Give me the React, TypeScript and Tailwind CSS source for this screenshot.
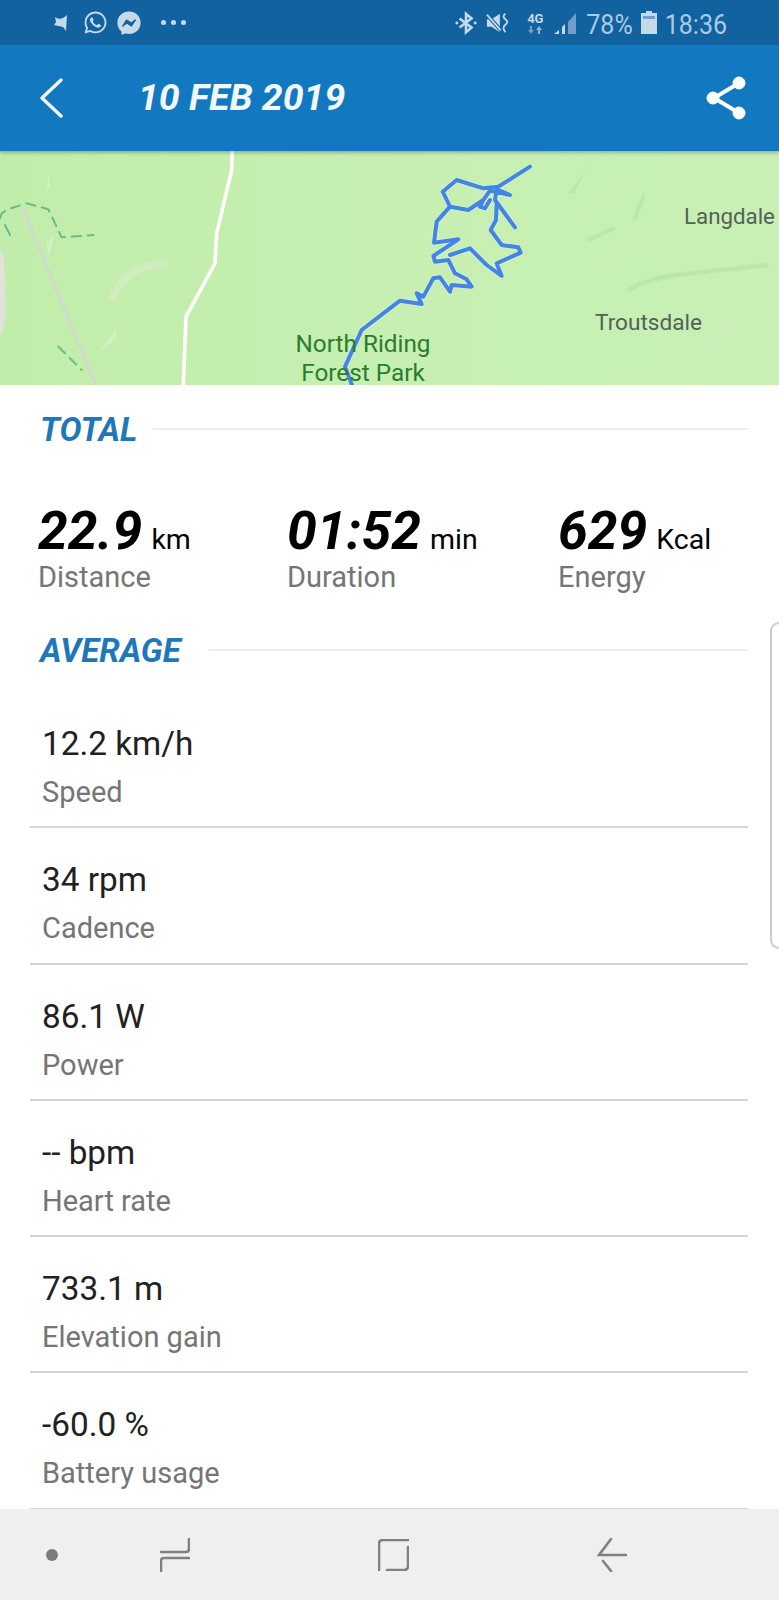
import React from "react";
import { FaWhatsapp, FaFacebookMessenger } from "react-icons/fa";

const font = { fontFamily: 'Roboto, "Noto Sans", sans-serif' };
const route =
  "M390,50 L295,110 L250,115 L170,90 L128,125 L150,170 L205,180 L250,150 L270,122 L330,135 L290,118 L285,150 L345,232 M290,160 L288,210 L272,240 L305,285 L355,292 L362,308 L290,340 L305,378 L260,345 L210,295 L150,315 M150,170 L110,215 L102,278 L175,268 L100,318 L105,335 L145,330 L165,370 L200,388 L215,410 L155,405 L150,425 L120,382 L100,385 L70,440 L50,430 L65,462 L0,452 L-115,540 L-165,650 L-144,705 M250,150 L240,170 L255,175 L270,150";

function MapArt() {
  return (
    <svg viewBox="0 151 779 234" className="absolute inset-0 h-full w-full">
      <g transform="translate(0 150) scale(0.3333)" fill="none" strokeLinecap="round" strokeLinejoin="round">
        <path d="M0,290 L12,330 L18,470 L12,530 L0,565 Z" fill="#e2e2da" />
        <path d="M145,75 L153,115 L140,120 Z" fill="#d3f0c3" />
        <path d="M165,255 L145,320 L140,280 Z" fill="#d3f0c3" />
        <path d="M490,342 C430,345 370,370 340,440" stroke="#d0edbe" strokeWidth="24" />
        <path d="M350,530 L300,605 L350,565 Z" fill="#d3f0c3" />
        <path d="M70,180 L285,700" stroke="#d0dcca" strokeWidth="11" />
        <path d="M697,0 L695,60 L650,250 L645,340 L558,500 L550,705" stroke="#ffffff" strokeWidth="11" />
        <path d="M0,205 L5,190 L25,177 L80,160 L145,178 L185,262 L280,255" stroke="#6dbb88" strokeWidth="6" strokeDasharray="28 20" />
        <path d="M15,225 L30,255" stroke="#6dbb88" strokeWidth="6" />
        <path d="M175,590 L245,660" stroke="#6dbb88" strokeWidth="6" strokeDasharray="28 20" />
      </g>
      <g transform="translate(400 150) scale(0.3333)" fill="none" strokeLinecap="round" strokeLinejoin="round">
        <path d="M520,130 L575,30 L560,60 L505,130 Z" fill="#bde6aa" />
        <path d="M530,190 C620,170 670,110 690,100" stroke="#ccedb9" strokeWidth="12" />
        <path d="M705,205 L730,140" stroke="#bde6aa" strokeWidth="12" />
        <path d="M570,268 L640,235" stroke="#bde6aa" strokeWidth="12" />
        <path d="M600,355 C680,280 780,250 830,170" stroke="#ccedb9" strokeWidth="14" />
        <path d="M690,420 C740,370 950,365 1100,345" stroke="#bde6aa" strokeWidth="14" />
        <path d="M890,660 L990,535" stroke="#ccedb9" strokeWidth="22" />
        <path d={route} stroke="#d7efd0" strokeWidth="17" />
        <path d={route} stroke="#4285e4" strokeWidth="12" />
      </g>
    </svg>
  );
}

function Total({ value, unit, label }: { value: string; unit: string; label: string }) {
  return (
    <div>
      <div className="flex items-baseline leading-[50px] text-black">
        <span className="text-[53.5px] font-bold italic">{value}</span>
        <span className="ml-[9px] text-[28.5px]">{unit}</span>
      </div>
      <div className="-mt-[4px] text-[29px] leading-[32px] text-[#757575]">{label}</div>
    </div>
  );
}

function Row({ value, label }: { value: string; label: string }) {
  return (
    <div className="h-[136.3px] border-b-2 border-[#d6d6d6] pl-[12px] pt-[33px]">
      <div className="text-[33.3px] leading-[38px] text-[#212121]">{value}</div>
      <div className="mt-[13px] text-[29px] leading-[32px] text-[#757575]">{label}</div>
    </div>
  );
}

function Heading({ text, lineClass }: { text: string; lineClass: string }) {
  return (
    <div className="flex items-center">
      <span className="text-[33px] font-bold italic leading-[36px] text-[#1f77b9]">{text}</span>
      <div className={`mb-[3px] h-[2px] flex-1 bg-[#eeeeee] ${lineClass}`} />
    </div>
  );
}

export default function App() {
  return (
    <div className="relative h-[1600px] w-[779px] overflow-hidden bg-white" style={font}>
      {/* status bar */}
      <div className="flex h-[45px] items-center bg-[#11629f] pl-[53px] pr-[52px] text-[#a9cbe6]">
        <svg width="15" height="18" viewBox="0 0 15 18" className="mr-[15px]">
          <path d="M14 1 L13 17 L10 13 L1 11 L3 8 L2 3 C6 6 10 5 14 1 Z" fill="#c5d9ea" />
        </svg>
        <FaWhatsapp className="mr-[9px] text-[25px] text-[#c5d9ea]" />
        <FaFacebookMessenger className="mr-[20px] text-[24px] text-[#c5d9ea]" />
        <div className="flex gap-[5px]">
          <span className="h-[5px] w-[5px] rounded-full bg-[#c5d9ea]" />
          <span className="h-[5px] w-[5px] rounded-full bg-[#c5d9ea]" />
          <span className="h-[5px] w-[5px] rounded-full bg-[#c5d9ea]" />
        </div>
        <div className="flex-1" />
        <svg width="22" height="24" viewBox="0 0 24 24" fill="none" stroke="#c5d9ea" strokeWidth="2.8" className="mr-[9px]">
          <path d="M5 7 L18 17 L12 22 L12 2 L18 7 L5 17" />
          <circle cx="2" cy="12" r="1.6" fill="#c5d9ea" stroke="none" />
          <circle cx="22" cy="12" r="1.6" fill="#c5d9ea" stroke="none" />
        </svg>
        <svg width="24" height="24" viewBox="0 0 26 24" fill="none" className="mr-[16px]">
          <path d="M1 8 H6 L15 2 V22 L6 16 H1 Z" fill="#c5d9ea" />
          <path d="M1 3 L17 21" stroke="#11629f" strokeWidth="4" />
          <path d="M1 3 L16 20" stroke="#c5d9ea" strokeWidth="2" />
          <path d="M21 2 Q17 5 21 8 Q25 11 21 14 Q17 17 21 22" stroke="#c5d9ea" strokeWidth="2" />
        </svg>
        <div className="mr-[9px] flex w-[18px] flex-col items-center">
          <span className="text-[13px] font-bold leading-[14px] text-[#c5d9ea]">4G</span>
          <svg width="16" height="8" viewBox="0 0 16 8" fill="#6f9fc6">
            <path d="M4 8 L1 4 H3 V0 H5 V4 H7 Z" />
            <path d="M12 0 L15 4 H13 V8 H11 V4 H9 Z" fill="#8fb6d6" />
          </svg>
        </div>
        <svg width="24" height="24" viewBox="0 0 24 24" className="mr-[9px]">
          <path d="M1 23 L6 19 V23 Z" fill="#c5d9ea" />
          <path d="M9 16 L12 13 V23 H9 Z" fill="#c5d9ea" />
          <path d="M15 11 L23 2 V23 H15 Z" fill="#6f9fc6" />
        </svg>
        <span className="mr-[8px] mt-[3px] origin-center scale-y-110 text-[25px] leading-none">78%</span>
        <svg width="16" height="23" viewBox="0 0 16 23" className="mr-[8px]">
          <path d="M5 0 H11 V2 H16 V23 H0 V2 H5 Z" fill="#c5d9ea" />
          <rect x="2" y="5" width="12" height="3" fill="#6f9fc6" />
        </svg>
        <span className="mt-[3px] origin-center scale-y-110 text-[25px] leading-none">18:36</span>
      </div>

      {/* header */}
      <div className="relative z-10 flex h-[106px] items-center bg-[#1278c0] pl-[39px] pr-[31px] shadow-[0_2px_3px_rgba(0,0,0,0.25)]">
        <svg width="24" height="40" viewBox="0 0 24 40" fill="none" stroke="#f2f8fc" strokeWidth="3.4" strokeLinecap="round" strokeLinejoin="round">
          <path d="M22 2 L3 20 L22 38" />
        </svg>
        <h1 className="ml-[75px] flex-1 text-[37.5px] font-bold italic leading-none text-[#f2f8fc]">10 FEB 2019</h1>
        <svg width="42" height="46" viewBox="0 0 42 46" fill="#ffffff" stroke="#ffffff">
          <path d="M33 8 L8 23 L33 38" fill="none" strokeWidth="4" />
          <circle cx="33" cy="8" r="6" />
          <circle cx="7" cy="23" r="6" />
          <circle cx="33" cy="38" r="6" />
        </svg>
      </div>

      {/* map */}
      <div className="relative h-[234px] bg-gradient-to-r from-[#c1edaa] via-[#c6efb1] to-[#c8f0b4]">
        <MapArt />
        <span className="absolute left-[291px] top-[178px] w-[144px] text-center text-[24.3px] leading-[29px] text-[#2a7d2e]">
          North Riding
          <br />
          Forest Park
        </span>
        <span className="absolute left-[684px] top-[52px] text-[22.3px] leading-[26px] text-[#53615a]">Langdale</span>
        <span className="absolute left-[595px] top-[159px] text-[22.6px] leading-[26px] text-[#53615a]">Troutsdale</span>
      </div>

      {/* total */}
      <div className="ml-[40px] mr-[31px] pt-[27px]">
        <Heading text="TOTAL" lineClass="ml-[16px]" />
      </div>
      <div className="ml-[38px] mt-[58px] grid grid-cols-[249px_271px_1fr]">
        <Total value="22.9" unit="km" label="Distance" />
        <Total value="01:52" unit="min" label="Duration" />
        <Total value="629" unit="Kcal" label="Energy" />
      </div>
      <div className="ml-[40px] mr-[31px] mt-[40px]">
        <Heading text="AVERAGE" lineClass="ml-[28px]" />
      </div>

      {/* rows */}
      <div className="ml-[30px] mr-[31px] mt-[23px]">
        <Row value="12.2 km/h" label="Speed" />
        <Row value="34 rpm" label="Cadence" />
        <Row value="86.1 W" label="Power" />
        <Row value="-- bpm" label="Heart rate" />
        <Row value="733.1 m" label="Elevation gain" />
        <Row value="-60.0 %" label="Battery usage" />
      </div>

      {/* edge panel handle */}
      <div className="absolute right-0 top-[622px] h-[327px] w-[9px] rounded-l-[9px] border-y-2 border-l-2 border-[#cdcdcd]" />

      {/* nav bar */}
      <div className="absolute bottom-0 left-0 right-0 flex h-[91px] items-center bg-[#efefef] pl-[46px]">
        <span className="h-[12px] w-[12px] rounded-full bg-[#7d7d7d]" />
        <svg width="30" height="34" viewBox="0 0 30 34" fill="none" stroke="#808080" strokeWidth="2.6" strokeLinecap="round" className="ml-[102px]">
          <path d="M1 14 H26 Q29 14 29 11 V1" />
          <path d="M29 20 H4 Q1 20 1 23 V33" />
        </svg>
        <svg width="31" height="32" viewBox="0 0 31 32" fill="none" stroke="#808080" strokeWidth="2.6" strokeLinecap="round" className="ml-[188px]">
          <path d="M1 31 V5 Q1 1 5 1 H30" />
          <path d="M30 8 V27 Q30 31 26 31 H9" />
        </svg>
        <svg width="30" height="34" viewBox="0 0 30 34" fill="none" stroke="#808080" strokeWidth="2.6" strokeLinecap="round" className="ml-[188px]">
          <path d="M14 1 L2 17 H29" />
          <path d="M6 23 L14 33" />
        </svg>
      </div>
    </div>
  );
}
